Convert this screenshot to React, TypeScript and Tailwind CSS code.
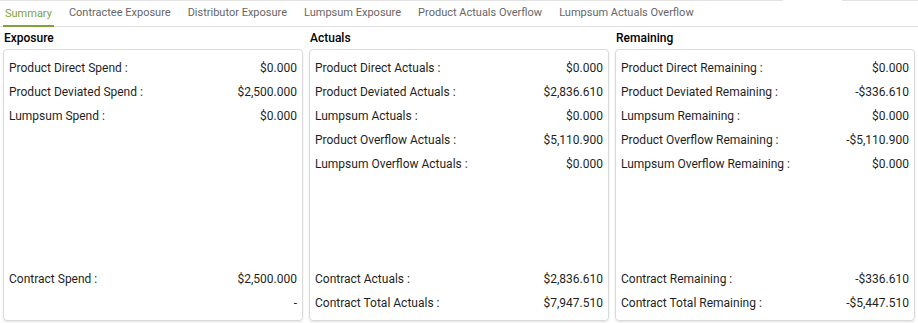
import React from "react";

const tabs = [
  "Summary",
  "Contractee Exposure",
  "Distributor Exposure",
  "Lumpsum Exposure",
  "Product Actuals Overflow",
  "Lumpsum Actuals Overflow",
];

type Row = [string, string];

const cols: { title: string; top: Row[]; bottom: Row[] }[] = [
  {
    title: "Exposure",
    top: [
      ["Product Direct Spend :", "$0.000"],
      ["Product Deviated Spend :", "$2,500.000"],
      ["Lumpsum Spend :", "$0.000"],
    ],
    bottom: [
      ["Contract Spend :", "$2,500.000"],
      ["", "-"],
    ],
  },
  {
    title: "Actuals",
    top: [
      ["Product Direct Actuals :", "$0.000"],
      ["Product Deviated Actuals :", "$2,836.610"],
      ["Lumpsum Actuals :", "$0.000"],
      ["Product Overflow Actuals :", "$5,110.900"],
      ["Lumpsum Overflow Actuals :", "$0.000"],
    ],
    bottom: [
      ["Contract Actuals :", "$2,836.610"],
      ["Contract Total Actuals :", "$7,947.510"],
    ],
  },
  {
    title: "Remaining",
    top: [
      ["Product Direct Remaining :", "$0.000"],
      ["Product Deviated Remaining :", "-$336.610"],
      ["Lumpsum Remaining :", "$0.000"],
      ["Product Overflow Remaining :", "-$5,110.900"],
      ["Lumpsum Overflow Remaining :", "$0.000"],
    ],
    bottom: [
      ["Contract Remaining :", "-$336.610"],
      ["Contract Total Remaining :", "-$5,447.510"],
    ],
  },
];

function RowItem({ r }: { r: Row }) {
  return (
    <div className="flex h-[24px] items-center justify-between text-[12px] text-[#1f1f1f]">
      <span>{r[0]}</span>
      <span>{r[1]}</span>
    </div>
  );
}

export default function App() {
  return (
    <div
      className="w-[918px] h-[323px] bg-white overflow-hidden"
      style={{ fontFamily: "Roboto, 'Liberation Sans', sans-serif" }}
    >
      <div className="flex h-px">
        <div className="w-[783px] bg-[#e3e3e3]" />
        <div className="w-[59px]" />
        <div className="flex-1 bg-[#e3e3e3]" />
      </div>
      <div className="flex h-[26px] items-stretch gap-[13px] border-b border-[#e0e0e0] pl-[3px]">
        {tabs.map((t, i) => (
          <div
            key={t}
            className={
              i === 0
                ? "flex items-center px-[2px] pt-[2px] border-b-2 border-[#7fa33a] -mb-px text-[11px] text-[#7fa33a]"
                : "flex items-center px-[2px] pb-[1px] text-[11px] text-[#666666]"
            }
          >
            {t}
          </div>
        ))}
      </div>
      <div className="grid grid-cols-3">
        {cols.map((c) => (
          <div key={c.title} className="flex flex-col px-[3px]">
            <div className="h-[22px] flex items-center pl-[1px] pb-[1px] text-[12px] font-medium text-black">
              {c.title}
            </div>
            <div className="flex h-[272px] flex-col justify-between rounded-[4px] border border-[#dadada] pl-[5px] pr-[5px] pt-[6px] pb-[5px] shadow-[0_1px_2px_rgba(0,0,0,0.12)]">
              <div className="flex flex-col">
                {c.top.map((r, i) => (
                  <RowItem key={i} r={r} />
                ))}
              </div>
              <div className="flex flex-col">
                {c.bottom.map((r, i) => (
                  <RowItem key={i} r={r} />
                ))}
              </div>
            </div>
          </div>
        ))}
      </div>
    </div>
  );
}
